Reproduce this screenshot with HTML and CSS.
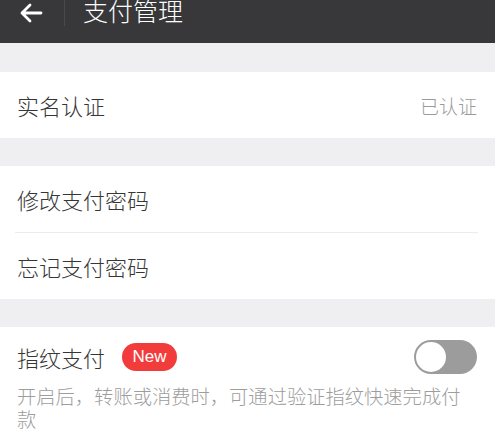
FILE: index.html
```html
<!DOCTYPE html>
<html lang="zh">
<head>
<meta charset="utf-8">
<link rel="stylesheet" href="styles.css">
</head>
<body>
<div class="page">
  <header class="topbar">
    <svg class="back" width="24" height="20" viewBox="0 0 24 20">
      <path d="M22 10H3M11 2L3 10L11 18" fill="none" stroke="#fff" stroke-width="2.8" stroke-linecap="round" stroke-linejoin="round"/>
    </svg>
    <span class="divider"></span>
    <span class="title">支付管理</span>
  </header>

  <section class="group">
    <div class="row">
      <span class="label">实名认证</span>
      <span class="value">已认证</span>
    </div>
  </section>

  <section class="group">
    <div class="row">
      <span class="label">修改支付密码</span>
    </div>
    <div class="sep"></div>
    <div class="row">
      <span class="label">忘记支付密码</span>
    </div>
  </section>

  <section class="group last">
    <div class="row finger">
      <span class="label">指纹支付</span>
      <span class="badge">New</span>
      <span class="toggle"><span class="knob"></span></span>
    </div>
    <p class="desc">开启后，转账或消费时，可通过验证指纹快速完成付款</p>
  </section>
</div>
</body>
</html>
```
FILE: styles.css
```css
* { box-sizing: border-box; }
html, body { margin: 0; padding: 0; }
body {
  background: #efeef1;
  font-family: "Noto Sans CJK SC", "Noto Sans", sans-serif;
  font-weight: 300;
  width: 495px;
  height: 436px;
  overflow: hidden;
}
.page { display: flex; flex-direction: column; }
.topbar {
  height: 43px;
  background: #38383b;
  display: flex;
  align-items: flex-start;
  overflow: hidden;
}
.back { margin: 3px 0 0 19px; flex: none; }
.divider {
  width: 1px;
  height: 26px;
  background: #4a4a4d;
  margin-left: 21px;
}
.title {
  color: #fff;
  font-size: 25px;
  line-height: 25px;
  margin-left: 18px;
  margin-top: -2px;
}
.group {
  background: #fff;
  margin-top: 29px;
}
.group + .group { margin-top: 28px; }
.row {
  height: 66px;
  display: flex;
  align-items: center;
  padding: 0 18px 0 17px;
}
.label {
  font-size: 22px;
  color: #363636;
}
.value {
  margin-left: auto;
  font-size: 19px;
  color: #9a9a9a;
}
.sep {
  height: 1px;
  background: #ececec;
  margin: 0 17px 0 15px;
}
.finger {
  height: 58px;
  padding-top: 2px;
}
.badge {
  margin-left: 17px;
  width: 55px;
  height: 28px;
  border-radius: 14px;
  background: #f23c3c;
  color: #fff;
  font-family: "Liberation Sans", Arial, sans-serif;
  font-weight: 400;
  font-size: 17px;
  display: flex;
  align-items: center;
  justify-content: center;
}
.toggle {
  margin-left: auto;
  width: 63px;
  height: 34px;
  border-radius: 17px;
  background: #9c9c9c;
  position: relative;
}
.knob {
  position: absolute;
  left: 2px;
  top: 2px;
  width: 30px;
  height: 30px;
  border-radius: 50%;
  background: #fff;
}
.desc {
  margin: 0;
  padding: 0 30px 12px 17px;
  font-size: 19.3px;
  line-height: 23px;
  color: #9d9d9d;
}
```
